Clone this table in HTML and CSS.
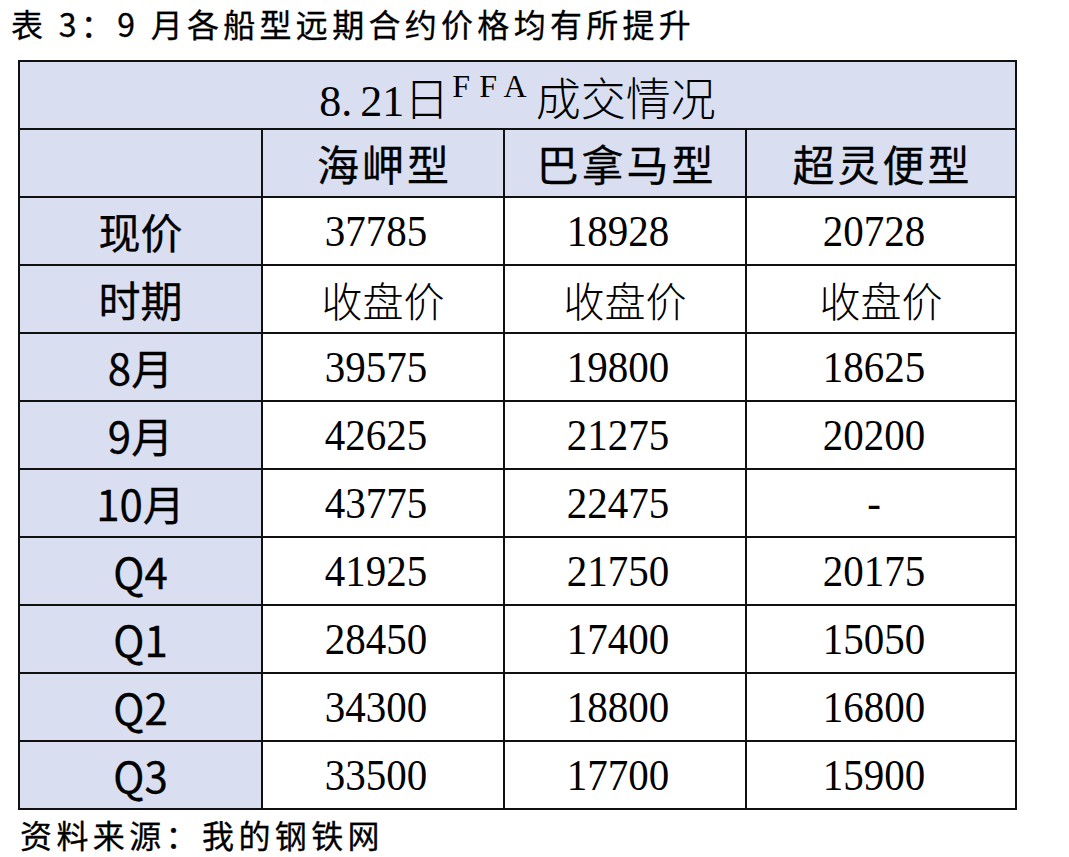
FILE: index.html
```html
<!DOCTYPE html>
<html lang="zh-CN">
<head>
<meta charset="utf-8">
<title>9月各船型远期合约价格</title>
<link rel="stylesheet" href="styles.css">
</head>
<body>
<p class="caption">表 3：9 月各船型远期合约价格均有所提升</p>
<table class="ffa">
  <colgroup>
    <col class="c1"><col class="c2"><col class="c3"><col class="c4">
  </colgroup>
  <tr>
    <th colspan="4" class="title"><span class="t-num t-dot">8.</span><span class="t-num">21</span><span class="t-cjk">日</span><span class="t-sup">FFA</span><span class="t-cjk">成交情况</span></th>
  </tr>
  <tr class="head">
    <th></th><th>海岬型</th><th>巴拿马型</th><th>超灵便型</th>
  </tr>
  <tr>
    <th>现价</th>
    <td class="num"><span>37785</span></td>
    <td class="num"><span>18928</span></td>
    <td class="num"><span>20728</span></td>
  </tr>
  <tr>
    <th>时期</th>
    <td class="song">收盘价</td>
    <td class="song">收盘价</td>
    <td class="song">收盘价</td>
  </tr>
  <tr>
    <th>8月</th>
    <td class="num"><span>39575</span></td>
    <td class="num"><span>19800</span></td>
    <td class="num"><span>18625</span></td>
  </tr>
  <tr>
    <th>9月</th>
    <td class="num"><span>42625</span></td>
    <td class="num"><span>21275</span></td>
    <td class="num"><span>20200</span></td>
  </tr>
  <tr>
    <th>10月</th>
    <td class="num"><span>43775</span></td>
    <td class="num"><span>22475</span></td>
    <td class="num"><span>-</span></td>
  </tr>
  <tr>
    <th>Q4</th>
    <td class="num"><span>41925</span></td>
    <td class="num"><span>21750</span></td>
    <td class="num"><span>20175</span></td>
  </tr>
  <tr>
    <th>Q1</th>
    <td class="num"><span>28450</span></td>
    <td class="num"><span>17400</span></td>
    <td class="num"><span>15050</span></td>
  </tr>
  <tr>
    <th>Q2</th>
    <td class="num"><span>34300</span></td>
    <td class="num"><span>18800</span></td>
    <td class="num"><span>16800</span></td>
  </tr>
  <tr>
    <th>Q3</th>
    <td class="num"><span>33500</span></td>
    <td class="num"><span>17700</span></td>
    <td class="num"><span>15900</span></td>
  </tr>
</table>
<p class="source">资料来源：我的钢铁网</p>
</body>
</html>
```

FILE: styles.css
```css
* { box-sizing: border-box; }
html, body { margin: 0; padding: 0; background: #fff; }
body {
  font-family: "Noto Sans CJK SC", "Noto Sans", sans-serif;
  color: #000;
  width: 1069px;
  height: 857px;
  overflow: hidden;
}
.caption {
  margin: 0;
  padding: 3px 0 0 11px;
  height: 60px;
  font-size: 32px;
  line-height: 40px;
  letter-spacing: 4.3px;
  white-space: nowrap;
  -webkit-text-stroke: 0.3px #000;
}
.ffa {
  border-collapse: collapse;
  margin-left: 18px;
  width: 997px;
  table-layout: fixed;
}
.c1 { width: 243px; }
.c2 { width: 242px; }
.c3 { width: 242px; }
.c4 { width: 270px; }
.ffa th, .ffa td {
  border: 2px solid #111;
  height: 68px;
  padding: 0;
  text-align: center;
  vertical-align: middle;
  white-space: nowrap;
}
.ffa th {
  background: #d9dff0;
  font-weight: 400;
  font-size: 42px;
  line-height: 1;
  -webkit-text-stroke: 0.3px #000;
}
.ffa .head th {
  letter-spacing: 3px;
  text-indent: 3px;
}
.ffa td { background: #fff; }
.ffa .title {
  font-weight: 400;
  line-height: 1;
  padding-top: 4px;
  -webkit-text-stroke: 0;
}
.t-num {
  font-family: "Liberation Serif", serif;
  font-size: 44px;
}
.t-dot { margin-right: 8px; }
.t-cjk {
  font-size: 45px;
  font-weight: 300;
}
.t-sup {
  font-family: "Liberation Serif", serif;
  font-size: 32px;
  letter-spacing: 9px;
  vertical-align: 19px;
  margin-left: 3px;
}
.num {
  padding-right: 14px !important;
}
.num span {
  display: inline-block;
  font-family: "Liberation Serif", serif;
  font-size: 41px;
  line-height: 1;
  transform: scaleY(1.1);
}
.song {
  font-size: 41px;
  font-weight: 300;
  line-height: 1;
}
.source {
  margin: 0;
  padding: 4px 0 0 20px;
  font-size: 32px;
  line-height: 40px;
  letter-spacing: 4.4px;
  white-space: nowrap;
  -webkit-text-stroke: 0.3px #000;
}
```
